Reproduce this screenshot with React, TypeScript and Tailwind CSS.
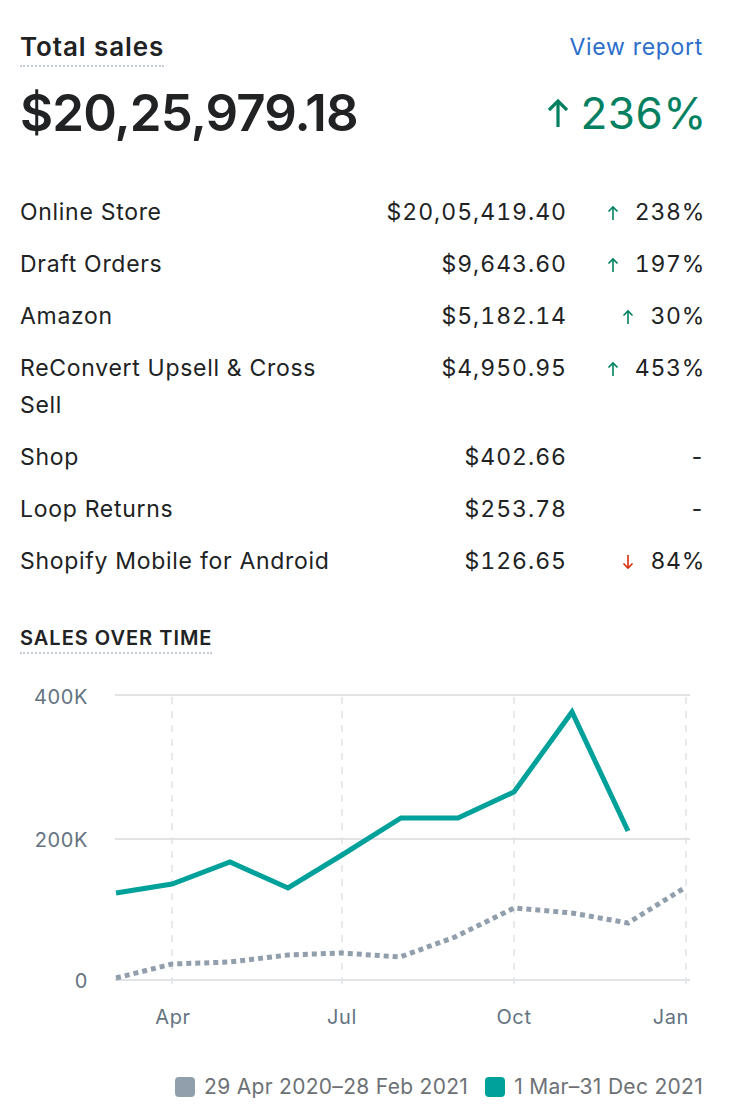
import React from 'react';

const rows = [
  { name: 'Online Store', amount: '$20,05,419.40', change: '238%', dir: 'up' },
  { name: 'Draft Orders', amount: '$9,643.60', change: '197%', dir: 'up' },
  { name: 'Amazon', amount: '$5,182.14', change: '30%', dir: 'up' },
  { name: 'ReConvert Upsell & Cross Sell', amount: '$4,950.95', change: '453%', dir: 'up' },
  { name: 'Shop', amount: '$402.66', change: '-', dir: 'none' },
  { name: 'Loop Returns', amount: '$253.78', change: '-', dir: 'none' },
  { name: 'Shopify Mobile for Android', amount: '$126.65', change: '84%', dir: 'down' },
];

const current = [
  [116, 893], [172, 884], [230, 862], [288, 888], [342, 855],
  [401, 818], [458, 818], [514, 792], [572, 712], [628, 831],
];
const previous = [
  [116, 978], [172, 964], [230, 962], [288, 955], [342, 953], [400, 957],
  [455, 937], [514, 908], [572, 913], [628, 923], [686, 887],
];

const pts = (p: number[][]) => p.map(([x, y]) => `${x},${y}`).join(' ');

function Arrow({ down, className }: { down?: boolean; className: string }) {
  return (
    <svg viewBox="0 0 12 16" className={className} fill="none" stroke="currentColor" strokeWidth={1.6}>
      {down ? (
        <>
          <path d="M6 1v13" />
          <path d="M1.5 9.5 6 14l4.5-4.5" />
        </>
      ) : (
        <>
          <path d="M6 15V2" />
          <path d="M1.5 6.5 6 2l4.5 4.5" />
        </>
      )}
    </svg>
  );
}

function SalesChart() {
  return (
    <svg width={736} height={380} viewBox="0 670 736 380" className="-mx-5 mt-[16px] block">
      {[695, 839, 980].map((y) => (
        <line key={y} x1={115} x2={690} y1={y} y2={y} stroke="#e1e3e5" strokeWidth={2} />
      ))}
      {[172, 342, 514, 686].map((x) => (
        <line key={x} x1={x} x2={x} y1={697} y2={988} stroke="#dfe3e8" strokeWidth={1.5} strokeDasharray="7 7" />
      ))}
      <g fill="#637381" fontSize={20} letterSpacing={0.6} fontFamily="Inter, sans-serif">
        <text x={88} y={704} textAnchor="end">400K</text>
        <text x={88} y={847} textAnchor="end">200K</text>
        <text x={88} y={988} textAnchor="end">0</text>
        <text x={173} y={1024} textAnchor="middle">Apr</text>
        <text x={342} y={1024} textAnchor="middle">Jul</text>
        <text x={514} y={1024} textAnchor="middle">Oct</text>
        <text x={689} y={1024} textAnchor="end">Jan</text>
      </g>
      <polyline points={pts(previous)} fill="none" stroke="#919eab" strokeWidth={5} strokeDasharray="5 4" />
      <polyline points={pts(current)} fill="none" stroke="#00a19a" strokeWidth={5} strokeLinejoin="miter" />
    </svg>
  );
}

export default function App() {
  return (
    <div className="min-h-screen bg-white pl-5 pr-[33px] pt-[31px] text-[#202223]" style={{ fontFamily: 'Inter, sans-serif' }}>
      <div className="flex items-start justify-between">
        <h2 className="border-b-2 border-dotted border-[#c4cdd5] pb-[2px] text-[26px] leading-8 font-semibold tracking-[0.9px]">Total sales</h2>
        <a className="text-[23px] leading-8 tracking-[0.7px] text-[#2c6ecb]">View report</a>
      </div>

      <div className="mt-[16px] flex items-center justify-between">
        <span className="text-[51px] leading-[60px] font-semibold tracking-[-0.9px]">$20,25,979.18</span>
        <span className="-mr-[4px] flex items-center text-[44px] leading-[60px] tracking-[0.5px] text-[#008060]">
          <Arrow className="mr-[10px] h-9 w-6" />
          236%
        </span>
      </div>

      <div className="mt-[51px] flex flex-col gap-[15px] text-[23px] leading-[37px] tracking-[0.7px]">
        {rows.map((r) => (
          <div key={r.name} className="grid grid-cols-[340px_1fr_138px] items-start">
            <span>{r.name}</span>
            <span className="-mr-[2px] text-right tabular-nums tracking-[1px]">{r.amount}</span>
            <span className="-mr-[2px] flex h-[37px] items-center justify-end tabular-nums">
              {r.dir === 'up' && <Arrow className="mr-[16px] h-4 w-3 text-[#008060]" />}
              {r.dir === 'down' && <Arrow down className="mr-[16px] h-4 w-3 text-[#d72c0d]" />}
              {r.change}
            </span>
          </div>
        ))}
      </div>

      <div className="mt-[46px]">
        <h3 className="inline-block border-b-2 border-dotted border-[#c4cdd5] pb-[2px] text-[20px] leading-6 font-semibold uppercase tracking-[1px]">
          Sales over time
        </h3>
      </div>

      <SalesChart />

      <div className="mt-[21px] flex items-center justify-end gap-[17px] text-[21px] tracking-[0.3px] text-[#6d7175]">
        <span className="flex items-center gap-[9px]">
          <span className="h-5 w-5 rounded bg-[#919eab]" />
          29 Apr 2020–28 Feb 2021
        </span>
        <span className="flex items-center gap-[9px]">
          <span className="h-5 w-5 rounded bg-[#00a19a]" />
          1 Mar–31 Dec 2021
        </span>
      </div>
    </div>
  );
}
